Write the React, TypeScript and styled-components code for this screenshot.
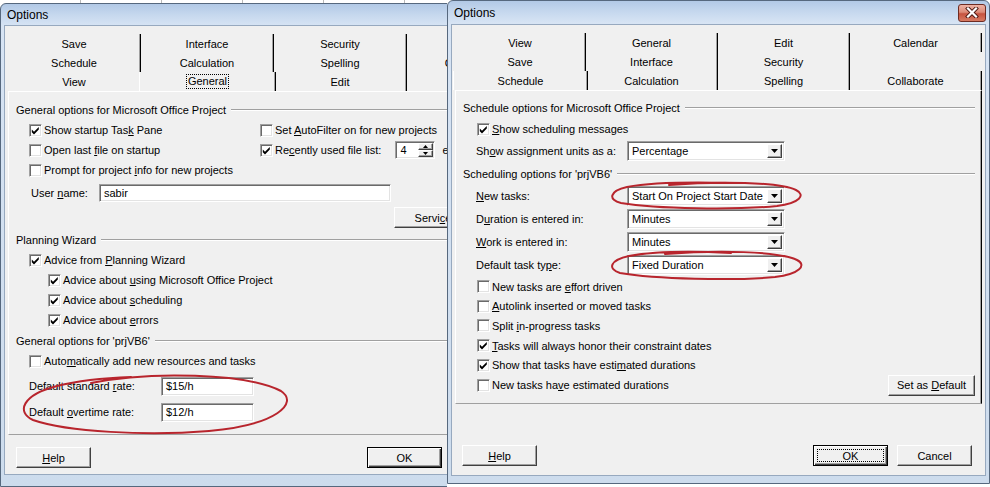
import React from 'react';
import styled, { createGlobalStyle, css } from 'styled-components';

const GlobalStyle = createGlobalStyle`
  html, body { margin: 0; padding: 0; background: #ffffff; }
  body { font-family: "Liberation Sans", Arial, sans-serif; font-size: 11px; color: #000; }
  *, *::before, *::after { box-sizing: border-box; }
`;

const sunken = css`
  background: #fff;
  border-style: solid;
  border-width: 1px;
  border-color: #a0a0a0 #fff #fff #a0a0a0;
  box-shadow: inset 1px 1px 0 #6a6a6a, inset -1px -1px 0 #e3e3e3;
`;

const raised = css`
  background: #f0f0f0;
  border-style: solid;
  border-width: 1px;
  border-color: #fff #404040 #404040 #fff;
  box-shadow: inset -1px -1px 0 #a0a0a0;
`;

const Screen = styled.div`
  width: 990px;
  height: 487px;
  display: flex;
  align-items: flex-start;
  overflow: hidden;
  background: #fff;
`;

const BackClip = styled.div`
  flex: none;
  width: 447px;
  height: 487px;
  overflow: hidden;
  padding-top: 3px;
  background: repeating-linear-gradient(90deg, #fff 0 80px, #b9b9b9 80px 81px) top left / 100% 3px no-repeat, #fff;
`;

const Window = styled.div<{ $w: number; $h: number; $pb: number }>`
  position: relative;
  flex: none;
  width: ${p => p.$w}px;
  height: ${p => p.$h}px;
  display: flex;
  flex-direction: column;
  padding: 0 3px ${p => p.$pb}px;
  border: 1px solid #56687e;
  border-radius: 6px 6px 0 0;
  background: linear-gradient(180deg, #b2c9e6 0px, #c6d8ee 11px, #d7e4f4 22px, #cddced 100%);
`;

const TitleBar = styled.div<{ $h: number }>`
  flex: none;
  height: ${p => p.$h}px;
  display: flex;
  align-items: center;
  justify-content: space-between;
  padding-left: 3px;
  font-size: 12px;
  color: #000;
`;

const CloseButton = styled.span`
  width: 28px;
  height: 18px;
  display: flex;
  align-items: center;
  justify-content: center;
  border: 1px solid #6e2b22;
  border-radius: 3px;
  background: linear-gradient(180deg, #eeb2a5 0%, #dc8b78 45%, #c6533f 55%, #d77a62 100%);
`;

const Client = styled.div`
  flex: 1;
  min-height: 0;
  display: flex;
  flex-direction: column;
  background: #f0f0f0;
  border: 1px solid #97a9bf;
  padding: 8px 3px 0;
`;

const TabGrid = styled.div<{ $cols: string }>`
  flex: none;
  display: grid;
  grid-template-columns: ${p => p.$cols};
  grid-auto-rows: 19px;
`;

const Tab = styled.div<{ $active?: boolean; $plain?: boolean }>`
  position: relative;
  display: flex;
  align-items: center;
  justify-content: center;
  white-space: nowrap;
  border-right: 1px solid ${p => (p.$plain ? 'transparent' : '#000')};
  box-shadow: ${p => (p.$plain ? 'none' : 'inset -1px 0 0 #a0a0a0')};
  ${p =>
    p.$active &&
    css`
      margin: 0 -2px 0 -2px;
      border-left: 1px solid #fff;
      background: #f0f0f0;
      z-index: 1;
    `}
`;

const FocusText = styled.span`
  border: 1px dotted #000;
  padding: 0 1px;
  line-height: 13px;
`;

const Panel = styled.div<{ $h: number; $pt: number }>`
  flex: none;
  height: ${p => p.$h}px;
  display: flex;
  flex-direction: column;
  padding: ${p => p.$pt}px 6px 0 7px;
  border-top: 1px solid #fff;
  border-left: 1px solid #fff;
  border-right: 1px solid #000;
  border-bottom: 1px solid #a0a0a0;
  box-shadow: inset -1px 0 0 #a0a0a0;
`;

const GroupHead = styled.div<{ $mt?: number }>`
  flex: none;
  display: flex;
  align-items: center;
  height: 20px;
  margin-top: ${p => p.$mt ?? 0}px;
  white-space: nowrap;
  &::after {
    content: '';
    flex: 1;
    margin-left: 5px;
    border-top: 1px solid #a0a0a0;
    border-bottom: 1px solid #fff;
  }
`;

const OptionGrid = styled.div`
  display: grid;
  grid-template-columns: 231px auto;
  grid-auto-rows: 20px;
  padding-left: 13px;
`;

const CheckRow = styled.div<{ $indent?: number; $mt?: number; $h?: number }>`
  flex: none;
  display: flex;
  align-items: center;
  gap: 2px;
  white-space: nowrap;
  height: ${p => p.$h ?? 20}px;
  margin-top: ${p => p.$mt ?? 0}px;
  padding-left: ${p => p.$indent ?? 0}px;
`;

const Box = styled.span`
  ${sunken};
  width: 13px;
  height: 13px;
  flex: none;
  display: flex;
  align-items: center;
  justify-content: center;
`;

const FieldRow = styled.div<{ $indent: number; $mt?: number }>`
  flex: none;
  display: flex;
  align-items: center;
  height: 20px;
  margin-top: ${p => p.$mt ?? 0}px;
  padding-left: ${p => p.$indent}px;
  white-space: nowrap;
`;

const FieldLabel = styled.span<{ $w: number }>`
  flex: none;
  width: ${p => p.$w}px;
`;

const TextField = styled.div<{ $w: number; $h: number }>`
  ${sunken};
  flex: none;
  width: ${p => p.$w}px;
  height: ${p => p.$h}px;
  display: flex;
  align-items: center;
  padding-left: 4px;
`;

const SelectBox = styled.div<{ $w: number }>`
  ${sunken};
  flex: none;
  width: ${p => p.$w}px;
  height: 20px;
  display: flex;
  align-items: stretch;
  padding: 2px;
`;

const SelectText = styled.span`
  flex: 1;
  display: flex;
  align-items: center;
  padding-left: 2px;
`;

const ArrowButton = styled.span`
  ${raised};
  flex: none;
  width: 15px;
  display: flex;
  align-items: center;
  justify-content: center;
`;

const Spinner = styled.div`
  ${sunken};
  flex: none;
  width: 40px;
  height: 18px;
  margin-left: 12px;
  display: flex;
  align-items: stretch;
  padding: 1px;
`;

const SpinText = styled.span`
  flex: 1;
  display: flex;
  align-items: center;
  padding-left: 3px;
`;

const SpinButtons = styled.span`
  flex: none;
  width: 15px;
  display: flex;
  flex-direction: column;
`;

const SpinButton = styled.span`
  ${raised};
  flex: 1;
  display: flex;
  align-items: center;
  justify-content: center;
`;

const AfterText = styled.span`
  margin-left: 5px;
`;

const PushButton = styled.button<{ $w?: number; $default?: boolean; $focus?: boolean }>`
  position: relative;
  flex: none;
  width: ${p => p.$w ?? 75}px;
  height: 21px;
  margin: 0;
  padding: 0;
  font: inherit;
  color: #000;
  white-space: nowrap;
  overflow: hidden;
  ${raised};
  ${p =>
    p.$default &&
    css`
      border: 1px solid #000;
      box-shadow: inset 1px 1px 0 #fff, inset -1px -1px 0 #404040, inset -2px -2px 0 #a0a0a0;
    `}
  ${p =>
    p.$focus &&
    css`
      &::after {
        content: '';
        position: absolute;
        inset: 3px;
        border: 1px dotted #000;
      }
    `}
`;

const ButtonLine = styled.div<{ $mt: number; $indent: number }>`
  flex: none;
  display: flex;
  margin-top: ${p => p.$mt}px;
  padding-left: ${p => p.$indent}px;
`;

const LastRow = styled.div`
  display: flex;
  align-items: center;
  justify-content: space-between;
`;

const ButtonBar = styled.div<{ $mt: number; $pl: number; $pr: number }>`
  flex: none;
  display: flex;
  align-items: center;
  margin-top: ${p => p.$mt}px;
  padding: 0 ${p => p.$pr}px 0 ${p => p.$pl}px;
`;

const ButtonGroup = styled.div`
  margin-left: auto;
  display: flex;
  gap: 9px;
`;

const Annotation = styled.svg<{ $x: number; $y: number }>`
  position: absolute;
  left: ${p => p.$x}px;
  top: ${p => p.$y}px;
  overflow: visible;
  pointer-events: none;
  z-index: 5;
`;

/* ---------- helpers ---------- */

const label = (s: string) => {
  const i = s.indexOf('&');
  if (i < 0) return s;
  return (
    <>
      {s.slice(0, i)}
      <u>{s[i + 1]}</u>
      {s.slice(i + 2)}
    </>
  );
};

const CheckGlyph = () => (
  <svg width="9" height="9" viewBox="0 0 9 9">
    <path d="M0.8 3.6 L3 5.8 L7.8 1 L7.8 3.6 L3 8.4 L0.8 6.2 Z" fill="#000" />
  </svg>
);

const DownTri = ({ w = 7, h = 4 }: { w?: number; h?: number }) => (
  <svg width={w} height={h} viewBox={`0 0 ${w} ${h}`}>
    <path d={`M0 0 L${w} 0 L${w / 2} ${h} Z`} fill="#000" />
  </svg>
);

const UpTri = () => (
  <svg width="5" height="3" viewBox="0 0 5 3">
    <path d="M0 3 L5 3 L2.5 0 Z" fill="#000" />
  </svg>
);

type CheckProps = { on?: boolean; text: string; indent?: number; mt?: number; h?: number };

const Check = ({ on, text, indent, mt, h }: CheckProps) => (
  <CheckRow $indent={indent} $mt={mt} $h={h}>
    <Box>{on && <CheckGlyph />}</Box>
    <span>{label(text)}</span>
  </CheckRow>
);

const Select = ({ value, w = 158 }: { value: string; w?: number }) => (
  <SelectBox $w={w}>
    <SelectText>{value}</SelectText>
    <ArrowButton>
      <DownTri />
    </ArrowButton>
  </SelectBox>
);

const Close = () => (
  <CloseButton>
    <svg width="14" height="11" viewBox="0 0 14 11">
      <path d="M3 1.5 L11 9.5 M11 1.5 L3 9.5" stroke="#4a1610" strokeWidth="4" strokeLinecap="square" />
      <path d="M3 1.5 L11 9.5 M11 1.5 L3 9.5" stroke="#fff" strokeWidth="2.2" strokeLinecap="square" />
    </svg>
  </CloseButton>
);

type TabStripProps = { rows: string[][]; cols: string; activeRow: number; activeCol: number; focus?: boolean };

const TabStrip = ({ rows, cols, activeRow, activeCol, focus }: TabStripProps) => (
  <TabGrid $cols={cols}>
    {rows.map((row, r) =>
      row.map((t, c) => {
        const active = r === activeRow && c === activeCol;
        const beforeActive = r === activeRow && c + 1 === activeCol;
        return (
          <Tab key={`${r}-${c}`} $active={active} $plain={!t || beforeActive}>
            {active && focus ? <FocusText>{t}</FocusText> : t}
          </Tab>
        );
      })
    )}
  </TabGrid>
);

const Ellipse = ({ x, y, w, h, d }: { x: number; y: number; w: number; h: number; d: string }) => (
  <Annotation $x={x} $y={y} width={w} height={h} viewBox={`0 0 ${w} ${h}`}>
    <path d={d} fill="none" stroke="#b8252d" strokeWidth="2" strokeLinecap="round" />
  </Annotation>
);

/* ---------- dialogs ---------- */

const GeneralDialog = () => (
  <Window $w={548} $h={484} $pb={11}>
    <TitleBar $h={21}>
      <span>Options</span>
      <Close />
    </TitleBar>
    <Client>
      <TabStrip
        cols="repeat(4, 133px)"
        rows={[
          ['Save', 'Interface', 'Security', ''],
          ['Schedule', 'Calculation', 'Spelling', 'Collaborate'],
          ['View', 'General', 'Edit', 'Calendar'],
        ]}
        activeRow={2}
        activeCol={1}
        focus
      />
      <Panel $h={344} $pt={8}>
        <GroupHead>General options for Microsoft Office Project</GroupHead>
        <OptionGrid>
          <Check on text="Show startup Tas&k Pane" />
          <Check text="Set &AutoFilter on for new projects" />
          <Check text="Open last &file on startup" />
          <CheckRow>
            <Box>
              <CheckGlyph />
            </Box>
            <span>{label('Re&cently used file list:')}</span>
            <Spinner>
              <SpinText>4</SpinText>
              <SpinButtons>
                <SpinButton>
                  <UpTri />
                </SpinButton>
                <SpinButton>
                  <DownTri w={5} h={3} />
                </SpinButton>
              </SpinButtons>
            </Spinner>
            <AfterText>entries</AfterText>
          </CheckRow>
          <Check text="Prompt for project &info for new projects" />
        </OptionGrid>
        <FieldRow $indent={15} $mt={3}>
          <FieldLabel $w={68}>{label('User &name:')}</FieldLabel>
          <TextField $w={292} $h={18}>sabir</TextField>
        </FieldRow>
        <ButtonLine $mt={4} $indent={378}>
          <PushButton $w={128}>{label('Servi&ce Options...')}</PushButton>
        </ButtonLine>
        <GroupHead $mt={2}>Planning Wizard</GroupHead>
        <Check on indent={13} text="Advice from &Planning Wizard" />
        <Check on indent={32} text="Advice about &using Microsoft Office Project" />
        <Check on indent={32} text="Advice about &scheduling" />
        <Check on indent={32} text="Advice about &errors" />
        <GroupHead $mt={1}>General options for 'prjVB6'</GroupHead>
        <Check indent={13} text="Auto&matically add new resources and tasks" />
        <FieldRow $indent={13} $mt={5}>
          <FieldLabel $w={132}>{label('Default standard &rate:')}</FieldLabel>
          <TextField $w={93} $h={19}>$15/h</TextField>
        </FieldRow>
        <FieldRow $indent={13} $mt={6}>
          <FieldLabel $w={132}>{label('Default &overtime rate:')}</FieldLabel>
          <TextField $w={93} $h={19}>$12/h</TextField>
        </FieldRow>
      </Panel>
      <ButtonBar $mt={12} $pl={8} $pr={14}>
        <PushButton>{label('&Help')}</PushButton>
        <ButtonGroup>
          <PushButton $default>OK</PushButton>
          <PushButton>Cancel</PushButton>
        </ButtonGroup>
      </ButtonBar>
    </Client>
    <Ellipse
      x={18}
      y={367}
      w={272}
      h={64}
      d="M72 12 C130 0, 228 2, 262 20 C280 32, 258 54, 190 60 C128 65, 48 61, 14 49 C-3 41, 3 24, 38 15 C58 10, 86 7, 112 6"
    />
  </Window>
);

const ScheduleDialog = () => (
  <Window $w={543} $h={484} $pb={7}>
    <TitleBar $h={23}>
      <span>Options</span>
      <Close />
    </TitleBar>
    <Client>
      <TabStrip
        cols="131px 132px 132px 132px"
        rows={[
          ['View', 'General', 'Edit', 'Calendar'],
          ['Save', 'Interface', 'Security', ''],
          ['Schedule', 'Calculation', 'Spelling', 'Collaborate'],
        ]}
        activeRow={2}
        activeCol={0}
      />
      <Panel $h={314} $pt={7}>
        <GroupHead>Schedule options for Microsoft Office Project</GroupHead>
        <Check on indent={14} mt={1} text="&Show scheduling messages" />
        <FieldRow $indent={13} $mt={2}>
          <FieldLabel $w={151}>{label('Sh&ow assignment units as a:')}</FieldLabel>
          <Select value="Percentage" />
        </FieldRow>
        <GroupHead $mt={3}>Scheduling options for 'prjVB6'</GroupHead>
        <FieldRow $indent={13} $mt={2}>
          <FieldLabel $w={151}>{label('&New tasks:')}</FieldLabel>
          <Select value="Start On Project Start Date" />
        </FieldRow>
        <FieldRow $indent={13} $mt={3}>
          <FieldLabel $w={151}>{label('D&uration is entered in:')}</FieldLabel>
          <Select value="Minutes" />
        </FieldRow>
        <FieldRow $indent={13} $mt={3}>
          <FieldLabel $w={151}>{label('&Work is entered in:')}</FieldLabel>
          <Select value="Minutes" />
        </FieldRow>
        <FieldRow $indent={13} $mt={3}>
          <FieldLabel $w={151}>{label('Default task ty&pe:')}</FieldLabel>
          <Select value="Fixed Duration" />
        </FieldRow>
        <Check indent={14} mt={2} h={19.6} text="New tasks are &effort driven" />
        <Check indent={14} h={19.6} text="&Autolink inserted or moved tasks" />
        <Check indent={14} h={19.6} text="Split &in-progress tasks" />
        <Check on indent={14} h={19.6} text="&Tasks will always honor their constraint dates" />
        <Check on indent={14} h={19.6} text="Show that tasks have esti&mated durations" />
        <LastRow>
          <Check indent={14} h={19.6} text="New tasks ha&ve estimated durations" />
          <PushButton $w={87}>{label('Set as &Default')}</PushButton>
        </LastRow>
      </Panel>
      <ButtonBar $mt={41} $pl={7} $pr={10}>
        <PushButton>{label('&Help')}</PushButton>
        <ButtonGroup>
          <PushButton $default $focus>
            OK
          </PushButton>
          <PushButton>Cancel</PushButton>
        </ButtonGroup>
      </ButtonBar>
    </Client>
    <Ellipse
      x={159}
      y={180}
      w={196}
      h={28}
      d="M62 4 C112 0, 172 1, 189 9 C199 14, 193 22, 170 25 C128 29, 50 28, 14 22 C1 19, 2 10, 20 6 C42 2, 82 1, 122 2"
    />
    <Ellipse
      x={159}
      y={249}
      w={196}
      h={30}
      d="M58 4 C110 0, 172 1, 190 10 C200 15, 193 24, 168 27 C126 31, 48 29, 13 23 C0 19, 3 10, 22 6 C44 2, 84 1, 124 3"
    />
  </Window>
);

export default function App() {
  return (
    <>
      <GlobalStyle />
      <Screen>
        <BackClip>
          <GeneralDialog />
        </BackClip>
        <ScheduleDialog />
      </Screen>
    </>
  );
}
